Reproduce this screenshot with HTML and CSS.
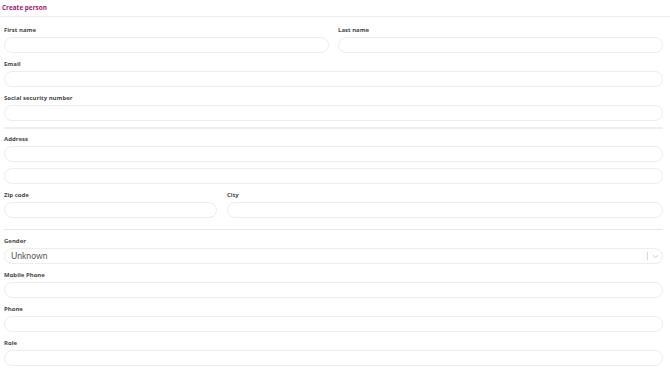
FILE: index.html
```html
<!DOCTYPE html>
<html>
<head>
<meta charset="utf-8">
<link rel="stylesheet" href="styles.css">
</head>
<body>
<div class="header"><span class="title">Create person</span></div>
<form class="form">
  <div class="row two">
    <div class="field"><label>First name</label><div class="input"></div></div>
    <div class="field"><label>Last name</label><div class="input"></div></div>
  </div>
  <div class="field"><label>Email</label><div class="input"></div></div>
  <div class="field"><label>Social security number</label><div class="input"></div></div>
  <div class="sep thick"></div>
  <div class="field"><label>Address</label><div class="input"></div><div class="input"></div></div>
  <div class="row zip">
    <div class="field"><label>Zip code</label><div class="input"></div></div>
    <div class="field"><label>City</label><div class="input"></div></div>
  </div>
  <div class="sep thin"></div>
  <div class="field"><label>Gender</label>
    <div class="input select"><span class="value">Unknown</span><span class="ind"><span class="bar"></span><svg width="7" height="5" viewBox="0 0 7 5"><path d="M1 1.2 L3.5 3.6 L6 1.2" fill="none" stroke="#c8c8c8" stroke-width="0.9"/></svg></span></div>
  </div>
  <div class="field"><label>Mobile Phone</label><div class="input"></div></div>
  <div class="field"><label>Phone</label><div class="input"></div></div>
  <div class="field"><label>Role</label><div class="input"></div></div>
</form>
</body>
</html>
```
FILE: styles.css
```css
html, body { margin: 0; padding: 0; background: #fff; }
body { font-family: "Open Sans", "Liberation Sans", sans-serif; }
.header { height: 16px; border-bottom: 1px solid #ececec; padding-left: 2px; display: flex; align-items: center; }
.title { font-size: 6.4px; font-weight: 700; color: #a3216f; line-height: 8px; margin-top: -1px; }
.form { padding: 8px 7px 0 4px; display: flex; flex-direction: column; gap: 6px; }
.row { display: grid; }
.row.two { grid-template-columns: 1fr 1fr; column-gap: 9px; }
.row.zip { grid-template-columns: 213px 1fr; column-gap: 10px; }
.field { display: flex; flex-direction: column; gap: 6px; }
.field label { font-size: 6px; font-weight: 700; color: #474747; line-height: 8px; height: 8px; margin-top: 1px; margin-bottom: -3px; }
.input { height: 14px; border: 1px solid #ededed; border-radius: 9px; background: #fff; }
.sep { background: #efefef; }
.sep.thick { height: 2px; margin-top: 0; margin-bottom: -1px; }
.sep.thin { height: 1px; margin-top: 5px; background: #e6e6e6; }
.select { display: flex; align-items: center; justify-content: space-between; padding: 0 0 0 6px; }
.value { font-size: 8.6px; color: #555; font-family: "Lato", "Open Sans", sans-serif; }
.ind { display: flex; align-items: center; gap: 4px; padding-right: 3px; }
.bar { width: 1px; height: 8px; background: #d6d6d6; }
.ind svg { display: block; }
```
